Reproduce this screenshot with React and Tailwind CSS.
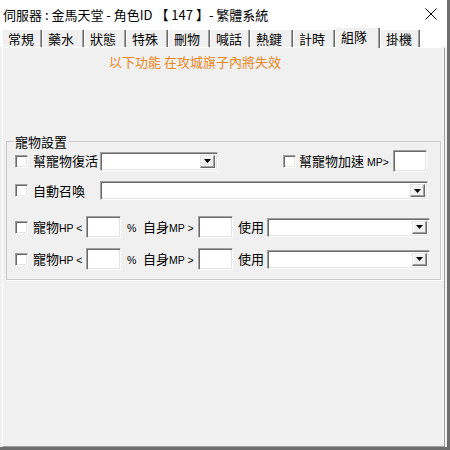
import React from 'react';

const tabs = [
    { label: '常規', w: 'w-[40px]' },
    { label: '藥水', w: 'w-[42px]' },
    { label: '狀態', w: 'w-[42px]' },
    { label: '特殊', w: 'w-[42px]' },
    { label: '刪物', w: 'w-[42px]' },
    { label: '喊話', w: 'w-[40px]' },
    { label: '熱鍵', w: 'w-[43px]' },
    { label: '計時', w: 'w-[42px]' },
    { label: '組隊', w: 'w-[45px]', active: true },
    { label: '掛機', w: 'w-[40px]' },
];

// sunken 3D edge, classic win32 look
const sunken = 'border border-t-[#a0a0a0] border-l-[#a0a0a0] border-b-white border-r-white shadow-[inset_1px_1px_0_#696969,inset_-1px_-1px_0_#e3e3e3] bg-white';

const CheckBox = () => <div className={`w-[13px] h-[13px] shrink-0 ${sunken}`} />;

const Field = ({ w }) => <div className={`${w} h-[22px] shrink-0 ${sunken}`} />;

const Combo = ({ w }) => (
    <div className={`${w} h-[19px] shrink-0 flex justify-end items-stretch p-[2px] ${sunken}`}>
        <div className="w-[15px] flex items-center justify-center bg-[#f0f0f0] border border-t-[#e3e3e3] border-l-[#e3e3e3] border-b-[#696969] border-r-[#696969] shadow-[inset_-1px_-1px_0_#a0a0a0,inset_1px_1px_0_#ffffff]">
            <svg width="7" height="4" viewBox="0 0 7 4">
                <path d="M0 0H7L3.5 4Z" fill="#000" />
            </svg>
        </div>
    </div>
);

const Latin = ({ children }) => (
    <span className="text-[10.5px]" style={{ fontFamily: '"Liberation Sans", Arial, sans-serif' }}>{children}</span>
);

const Label = ({ className, children }) => (
    <span className={`shrink-0 whitespace-nowrap ${className}`}>{children}</span>
);

const HpRow = () => (
    <div className="flex items-center h-[22px]">
        <div className="ml-[8px]"><CheckBox /></div>
        <Label className="ml-[5px] w-[53px]">寵物<Latin>HP &lt;</Latin></Label>
        <Field w="w-[35px]" />
        <Label className="ml-[6px] w-[16px]"><Latin>%</Latin></Label>
        <Label className="w-[55px]">自身<Latin>MP &gt;</Latin></Label>
        <Field w="w-[35px]" />
        <Label className="ml-[5px] w-[29px]">使用</Label>
        <Combo w="w-[163px]" />
    </div>
);

export default function App() {
    return (
        <div
            className="w-[450px] h-[450px] bg-[#f0f0f0] flex flex-col text-[13px] text-black overflow-hidden border-r-[3px] border-b-[3px] border-r-[#6e6e6e] border-b-[#6e6e6e]"
            style={{ fontFamily: '"Noto Sans CJK TC", "Noto Sans", sans-serif' }}
        >
            {/* Title bar */}
            <div className="h-[28px] bg-white flex items-center justify-between pl-[3px] pr-[10px] shrink-0">
                <span className="leading-none whitespace-nowrap">伺服器 : 金馬天堂 - 角色ID 【 147 】- 繁體系統</span>
                <svg width="12" height="12" viewBox="0 0 12 12">
                    <path d="M0.5 0.5L11.5 11.5M11.5 0.5L0.5 11.5" stroke="#000" strokeWidth="1" />
                </svg>
            </div>

            {/* Tabs */}
            <div className="h-[19px] flex items-end pl-[2px] shrink-0 bg-white">
                {tabs.map(t => (
                    <div
                        key={t.label}
                        className={`${t.w} flex items-start pl-[5px] bg-[#f0f0f0] border-l border-l-white border-r border-r-[#696969] shadow-[inset_-1px_0_0_#a0a0a0] leading-none ${t.active ? 'h-[20px] -mb-[1px] pt-[2px] relative z-10' : 'h-[17px] pt-[2px]'}`}
                    >
                        <span className="text-[13px] whitespace-nowrap">{t.label}</span>
                    </div>
                ))}
            </div>

            {/* Panel */}
            <div className="flex-1 ml-[2px] mr-[2px] border-t border-l border-t-white border-l-white border-r border-r-[#a0a0a0] border-b border-b-[#a0a0a0] flex flex-col">
                <div className="ml-[106px] mt-[7px] text-[#e8871e] leading-none">以下功能 在攻城旗子內將失效</div>

                <fieldset className="mt-[67px] ml-[3px] mr-[3px] border border-[#c8c8c8] shadow-[1px_1px_0_#ffffff] pb-[9px] pt-[0px] px-0">
                    <legend className="ml-[6px] px-[2px] leading-[13px]">寵物設置</legend>

                    {/* Row 1 */}
                    <div className="flex items-center h-[22px] mt-[2px]">
                        <div className="ml-[8px]"><CheckBox /></div>
                        <Label className="ml-[5px] w-[67px]">幫寵物復活</Label>
                        <Combo w="w-[118px]" />
                        <div className="ml-[65px]"><CheckBox /></div>
                        <Label className="ml-[3px] w-[94px]">幫寵物加速 <Latin>MP&gt;</Latin></Label>
                        <Field w="w-[34px]" />
                    </div>

                    {/* Row 2 */}
                    <div className="flex items-center h-[19px] mt-[9px]">
                        <div className="ml-[8px]"><CheckBox /></div>
                        <Label className="ml-[5px] w-[67px]">自動召喚</Label>
                        <Combo w="w-[328px]" />
                    </div>

                    <div className="mt-[16px]"><HpRow /></div>
                    <div className="mt-[10px]"><HpRow /></div>
                </fieldset>
            </div>
        </div>
    );
}
